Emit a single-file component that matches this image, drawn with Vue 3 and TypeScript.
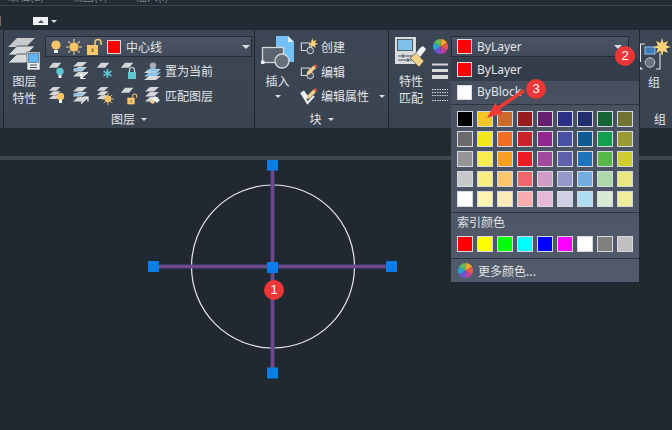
<script setup lang="ts">
const standard: string[][] = [
  ['#000000', '#f3c526', '#c9692a', '#981b20', '#66206f', '#2a3088', '#1f2f6d', '#156435', '#6f7430'],
  ['#6a6a6a', '#f3e81c', '#f26e22', '#cc2229', '#92278f', '#4650a5', '#0e5a92', '#10a04e', '#9a9a33'],
  ['#959595', '#f9ec50', '#f99d1c', '#ed1c24', '#a14a9d', '#5f60ad', '#1c75bc', '#57b847', '#cfcf2b'],
  ['#c7c8ca', '#f7ee7f', '#fdc66a', '#f0686c', '#d09cc6', '#9696ca', '#73acdf', '#add8a8', '#e8e87e'],
  ['#ffffff', '#fbf5b0', '#ffe9b5', '#f9acb0', '#e4b8d6', '#cfcfe6', '#b0dcf2', '#d8ead4', '#efef9b'],
]
const indexed: string[] = ['#ff0000', '#ffff00', '#00ff00', '#00ffff', '#0000ff', '#ff00ff', '#ffffff', '#808080', '#c0c0c0']
const handles: [number, number][] = [[272.5, 165], [272.5, 373], [153.5, 266.5], [391.5, 266.5], [272.5, 267.5]]
const wheel: { d: string; c: string }[] = [
  { d: 'M9 9V1A8 8 0 0 1 15.9 5Z', c: '#f5a623' },
  { d: 'M9 9L15.9 5A8 8 0 0 1 15.9 13Z', c: '#e8574a' },
  { d: 'M9 9L15.9 13A8 8 0 0 1 9 17Z', c: '#c2409a' },
  { d: 'M9 9V17A8 8 0 0 1 2.1 13Z', c: '#6a55d8' },
  { d: 'M9 9L2.1 13A8 8 0 0 1 2.1 5Z', c: '#2d9fd0' },
  { d: 'M9 9L2.1 5A8 8 0 0 1 9 1Z', c: '#5cbb5c' },
]
</script>

<template>
  <div class="app">
    <svg class="defs" width="0" height="0" aria-hidden="true">
      <defs>
        <symbol id="sheet" viewBox="0 0 18 18">
          <path d="M6 1H16L11 7H1Z" fill="#d5d7d8" />
        </symbol>
        <symbol id="stack" viewBox="0 0 18 18">
          <path d="M6 0H15L10 4.5H1Z" fill="#d5d7d8" />
          <path d="M6 5H15L10 9.5H1Z" fill="#d5d7d8" />
          <path d="M6 10H15L10 14.5H1Z" fill="#d5d7d8" />
        </symbol>
        <symbol id="bulb" viewBox="0 0 12 14">
          <circle cx="6" cy="5" r="4.6" />
          <path d="M4 10H8V13H4Z" fill="#eef0f1" />
        </symbol>
        <symbol id="sun" viewBox="0 0 16 16">
          <path d="M8 0V3M8 13V16M0 8H3M13 8H16M2.3 2.3L4.4 4.4M11.6 11.6L13.7 13.7M2.3 13.7L4.4 11.6M11.6 4.4L13.7 2.3" stroke="#e9d9a8" stroke-width="1.1" />
          <circle cx="8" cy="8" r="4.6" fill="#fbc566" />
        </symbol>
        <symbol id="open-lock" viewBox="0 0 16 18">
          <path d="M9 7V4.5A3 3 0 0 1 15 4.5V7" fill="none" stroke="#f4c56c" stroke-width="1.6" />
          <rect x="1" y="7" width="11" height="10" fill="#f7c76b" />
          <rect x="5.6" y="10.5" width="1.8" height="3.5" fill="#8a6a2c" />
        </symbol>
        <symbol id="block" viewBox="0 0 18 18">
          <path d="M1.5 4.5H11V13H1.5Z" fill="none" stroke="#d9dbdd" stroke-width="1.2" />
          <circle cx="11.5" cy="13" r="3.7" fill="#4a5361" stroke="#d9dbdd" stroke-width="1.1" />
        </symbol>
        <symbol id="pencil" viewBox="0 0 12 12">
          <path d="M1 9L7.5 2.5L10 5L3.5 11.5L0.8 11.8Z" fill="#f2cf8e" />
          <path d="M7.5 2.5L9 1L11.4 3.5L10 5Z" fill="#e8553f" />
        </symbol>
      </defs>
    </svg>

    <div class="menubar"><span>编辑(E)</span><span>视图(V)</span><span>插入(I)</span></div>
    <div class="quickbar">
      <i class="edge"></i>
      <span class="tab"><i class="up"></i></span>
      <i class="down small"></i>
    </div>

    <section class="ribbon">
      <div class="panel layer-panel">
        <div class="body">
          <div class="big-btn layer-big">
            <svg class="ic-big" width="33" height="34" viewBox="0 0 33 34">
              <path d="M9 1H27L18 10H0Z" fill="#c7c9ca" />
              <path d="M9 9H27L18 18H0Z" fill="#d6d8d9" stroke="#3b4452" stroke-width=".8" />
              <path d="M9 17H27L18 26H0Z" fill="#d6d8d9" stroke="#3b4452" stroke-width=".8" />
              <rect x="19" y="15" width="13" height="18" fill="#eceef0" stroke="#3b4452" stroke-width=".6" />
              <rect x="20.5" y="16.5" width="10" height="9" fill="#62b4f4" stroke="#39424e" stroke-width=".5" />
              <path d="M22 28H29M22 30.5H29" stroke="#4a5361" stroke-width="1" />
            </svg>
            <span>图层</span>
            <span>特性</span>
          </div>
          <div class="layer-main">
            <div class="layer-select">
              <svg class="bulb-yellow" width="12" height="14"><use href="#bulb" /></svg>
              <svg width="16" height="16"><use href="#sun" /></svg>
              <svg width="16" height="18"><use href="#open-lock" /></svg>
              <i class="red-box"></i>
              <span class="layer-name">中心线</span>
              <i class="down"></i>
            </div>
            <div class="tool-row">
              <svg width="18" height="18" viewBox="0 0 18 18">
                <use href="#sheet" width="15" height="15" />
                <circle cx="12" cy="9.5" r="3.7" fill="#5fc7d2" />
                <rect x="10.5" y="13" width="3" height="3" fill="#eef0f1" />
              </svg>
              <svg width="18" height="18" viewBox="0 0 18 18">
                <use href="#stack" />
                <path d="M2 6H12L10 8.5H1Z" fill="#8ec3ea" />
                <path d="M16 10L9 16M9 12V16.5H13.5" stroke="#fff" stroke-width="1.2" fill="none" />
              </svg>
              <svg width="18" height="18" viewBox="0 0 18 18">
                <use href="#sheet" width="15" height="15" />
                <path d="M11.5 7V16M7.5 9.3L15.5 13.7M7.5 13.7L15.5 9.3" stroke="#5fc7d2" stroke-width="1.6" />
              </svg>
              <svg width="18" height="18" viewBox="0 0 18 18">
                <use href="#sheet" width="15" height="15" />
                <path d="M9.5 10V8A2.5 2.5 0 0 1 14.5 8V10" fill="none" stroke="#b9e0e6" stroke-width="1.2" />
                <rect x="8" y="10" width="8" height="7" fill="#5fc7d2" />
              </svg>
              <svg width="18" height="18" viewBox="0 0 18 18">
                <path d="M5 7H17L12 11H0Z" fill="#d6d8d9" />
                <path d="M5 10.5H17L12 14.5H0Z" fill="#8ec3ea" />
                <path d="M5 14H17L12 18H0Z" fill="#d6d8d9" />
                <circle cx="9" cy="3.6" r="3.2" fill="#a9adb3" />
                <path d="M3.5 9.5A5.5 3.6 0 0 1 14.5 9.5Z" fill="#8ec3ea" />
              </svg>
              <span class="tool-text">置为当前</span>
            </div>
            <div class="tool-row">
              <svg width="18" height="18" viewBox="0 0 18 18">
                <use href="#stack" width="15" height="15" />
                <circle cx="12.5" cy="9.5" r="3.7" fill="#fbc566" />
                <rect x="11" y="13" width="3" height="3" fill="#eef0f1" />
              </svg>
              <svg width="18" height="18" viewBox="0 0 18 18">
                <use href="#stack" />
                <path d="M2 6H12L10 8.5H1Z" fill="#8ec3ea" />
                <path d="M9 16.5L16 10M11.5 10H16V14.5" stroke="#fff" stroke-width="1.2" fill="none" />
              </svg>
              <svg width="18" height="18" viewBox="0 0 18 18">
                <use href="#stack" width="15" height="15" />
                <use href="#sun" x="6" y="6" width="12" height="12" />
              </svg>
              <svg width="18" height="18" viewBox="0 0 18 18">
                <use href="#sheet" width="15" height="15" />
                <use href="#open-lock" x="6" y="6" width="12" height="12" />
              </svg>
              <svg width="18" height="18" viewBox="0 0 18 18">
                <use href="#stack" />
                <path d="M8 12L11 9L16 13L13 16Z" fill="#eef0f1" />
                <path d="M8 12L11 15L9 17L5.5 15Z" fill="#f2cf8e" />
              </svg>
              <span class="tool-text">匹配图层</span>
            </div>
          </div>
        </div>
        <div class="title"><span>图层</span><i class="down small"></i></div>
      </div>

      <div class="panel block-panel">
        <div class="body">
          <div class="big-btn insert-big">
            <svg class="ic-insert" width="34" height="34" viewBox="0 0 34 34">
              <path d="M15 0H27L33 6V26H15Z" fill="#73c1f6" />
              <path d="M27 0L33 6H27Z" fill="#d9eefb" />
              <rect x="1.5" y="11.5" width="21" height="15" fill="#5b6470" stroke="#d5d7d9" stroke-width="1.3" />
              <rect x="0" y="24.5" width="3.5" height="3.5" fill="#e8eaec" />
              <circle cx="21" cy="25" r="7" fill="#69717d" stroke="#d5d7d9" stroke-width="1.3" />
            </svg>
            <span>插入</span>
            <i class="down small insert-arrow"></i>
          </div>
          <div class="block-main">
            <div class="block-row">
              <svg width="18" height="18" viewBox="0 0 18 18">
                <use href="#block" y="1" width="16" height="16" />
                <path d="M12.5 0L13.5 3L16.5 2L15 4.5L18 6L15 7L15.8 10L13 8L10.5 10L11 7L8.5 6L11.5 4.5L10.5 2L12 3Z" fill="#fbd27a" />
              </svg>
              <span>创建</span>
            </div>
            <div class="block-row">
              <svg width="18" height="18" viewBox="0 0 18 18">
                <use href="#block" y="1" width="16" height="16" />
                <use href="#pencil" x="6" width="12" height="12" />
              </svg>
              <span>编辑</span>
            </div>
            <div class="block-row">
              <svg width="18" height="18" viewBox="0 0 18 18">
                <path d="M1 5.5L4 3.5L8 9L6 14Z" fill="#eef0f1" />
                <path d="M1 5.5L7.5 16L14 9" fill="none" stroke="#eef0f1" stroke-width="2" />
                <use href="#pencil" x="6" width="12" height="12" />
              </svg>
              <span>编辑属性</span>
              <i class="down small attr-arrow"></i>
            </div>
          </div>
        </div>
        <div class="title"><span>块</span><i class="down small"></i></div>
      </div>

      <div class="panel prop-panel">
        <div class="body">
          <div class="big-btn match-big">
            <svg class="ic-match" width="32" height="33" viewBox="0 0 32 33">
              <rect x="0" y="1" width="21" height="27" fill="#d9dbdd" />
              <rect x="2.5" y="3.5" width="15" height="11" fill="#7cc0ec" stroke="#39424e" stroke-width=".8" />
              <path d="M3 20H18M3 24H18M8 18V22M13 22V26" stroke="#4a5361" stroke-width="1.1" />
              <path d="M15 22L21 17L29 25L24 31Z" fill="#f3d089" stroke="#39424e" stroke-width=".6" />
              <path d="M21 17L25 12L28 10L31 13L29 16L25 21Z" fill="#eef0f1" />
            </svg>
            <span>特性</span>
            <span>匹配</span>
          </div>
          <div class="prop-icons">
            <svg width="17" height="17" viewBox="0 0 18 18">
              <path v-for="s in wheel" :key="s.d" :d="s.d" :fill="s.c" />
            </svg>
            <svg class="ic-lines" width="16" height="17" viewBox="0 0 16 17">
              <path d="M0 1.5H16" stroke="#d8dadc" stroke-width="2" />
              <path d="M0 7.5H16" stroke="#d8dadc" stroke-width="3" />
              <path d="M0 14H16" stroke="#d8dadc" stroke-width="4" />
            </svg>
            <svg class="ic-dashes" width="16" height="14" viewBox="0 0 16 14">
              <path d="M0 1.5H16M0 4.5H16M0 7.5H16M0 12.5H16" stroke="#d8dadc" stroke-width="1" stroke-dasharray="1.5 1" />
            </svg>
          </div>
          <div class="color-select">
            <i class="swatch-red"></i>
            <span>ByLayer</span>
            <i class="down"></i>
          </div>
        </div>
      </div>

      <div class="panel group-panel">
        <div class="body group-body">
          <svg class="ic-group" width="32" height="28" viewBox="0 0 32 28">
            <path d="M5 1H0.5V19M0.5 24V26H3M16 26H20V10" fill="none" stroke="#e5e7e9" stroke-width="1.1" />
            <rect x="5" y="4" width="10" height="7" fill="#3e7ab3" stroke="#8cc4ee" stroke-width="1" />
            <circle cx="10" cy="19.5" r="4.8" fill="#6c737d" stroke="#c5c8cb" stroke-width="1" />
            <path d="M22 -5L23.5 0L28 -2L26 2.5L31 4L26 5.5L28 10L23.5 8L22 13L20.5 8L16 10L18 5.5L13 4L18 2.5L16 -2L20.5 0Z" fill="#fbd27a" />
          </svg>
          <span>组</span>
        </div>
        <div class="group-title">组</div>
      </div>
    </section>

    <div class="gap"></div>
    <div class="strip"></div>

    <svg class="canvas" width="672" height="270" viewBox="0 160 672 270">
      <circle cx="273" cy="266.5" r="81.5" fill="none" stroke="#e6e8ea" stroke-width="1.2" />
      <path d="M272.5 165V373M153.5 266.5H391.5" stroke="#3f5094" stroke-width="4" />
      <path d="M272.5 165V373M153.5 266.5H391.5" stroke="#7a4688" stroke-width="2.4" />
      <rect v-for="h in handles" :key="h.join()" :x="h[0] - 5.5" :y="h[1] - 5.5" width="11" height="11" fill="#0a7ee8" />
    </svg>

    <div class="popup">
      <div class="pop-row active"><i class="swatch-red"></i><span>ByLayer</span></div>
      <div class="pop-row"><i class="swatch-white"></i><span>ByBlock</span></div>
      <div class="grid-wrap">
        <div v-for="(row, r) in standard" :key="r" class="swatches">
          <i v-for="c in row" :key="c" class="sw" :style="{ background: c }"></i>
        </div>
      </div>
      <div class="index-wrap">
        <div class="index-label">索引颜色</div>
        <div class="swatches">
          <i v-for="c in indexed" :key="c" class="sw" :style="{ background: c }"></i>
        </div>
      </div>
      <div class="more">
        <svg width="17" height="17" viewBox="0 0 18 18">
          <path v-for="s in wheel" :key="s.d" :d="s.d" :fill="s.c" />
        </svg>
        <span>更多颜色...</span>
      </div>
    </div>

    <svg class="arrow" width="40" height="32" viewBox="0 0 40 32">
      <path d="M36 0L38 3L13 20L16 24L0 29L8 14L11 17Z" fill="#ee3a35" />
    </svg>
    <span class="badge b1">1</span>
    <span class="badge b2">2</span>
    <span class="badge b3">3</span>
  </div>
</template>

<style scoped>
.app {
  position: relative;
  width: 672px;
  height: 430px;
  overflow: hidden;
  background: #212830;
  color: #e2e4e7;
  font-family: "Noto Sans CJK SC", "Noto Sans", sans-serif;
  font-size: 12px;
  line-height: 16px;
}
.app i { display: block; font-style: normal; }
.defs { position: absolute; }
.menubar {
  display: flex;
  gap: 28px;
  height: 6px;
  padding-left: 8px;
  overflow: hidden;
  background: #222a33;
  border-bottom: 1px solid #3c434b;
  box-sizing: border-box;
  font-size: 11px;
  line-height: 12px;
  color: #7d838a;
}
.menubar span { margin-top: -10px; }
.quickbar {
  display: flex;
  align-items: center;
  height: 24px;
  background: #222a33;
  padding-top: 6px;
  box-sizing: border-box;
}
.edge { width: 1px; height: 10px; background: #7a6a60; margin-right: 32px; }
.tab {
  display: flex;
  align-items: center;
  justify-content: center;
  width: 15px;
  height: 8px;
  background: #f0f1f2;
  margin-right: 3px;
}
.up { width: 0; height: 0; border: 3px solid transparent; border-top: 0; border-bottom: 3px solid #555; }
.down {
  width: 0;
  height: 0;
  border-left: 4px solid transparent;
  border-right: 4px solid transparent;
  border-top: 4px solid #d8dadc;
}
.down.small { border-left-width: 3.5px; border-right-width: 3.5px; border-top-width: 3.5px; }

.ribbon {
  display: flex;
  height: 98px;
  background: linear-gradient(#3d4654, #3a4350);
}
.panel { display: flex; flex-direction: column; box-sizing: border-box; border-left: 1px solid #20262e; }
.body { display: flex; height: 80px; padding-top: 6px; box-sizing: border-box; }
.title {
  display: flex;
  align-items: center;
  justify-content: center;
  gap: 6px;
  height: 18px;
}
.big-btn { display: flex; flex-direction: column; align-items: center; }

.layer-panel { margin-left: 3px; width: 251px; }
.layer-big { width: 41px; flex: none; }
.ic-big { margin: 1px 0 2px; }
.layer-big span:nth-of-type(2), .match-big span:nth-of-type(2) { margin-top: 1px; }
.layer-main { flex: 1; }
.layer-select {
  display: flex;
  align-items: center;
  gap: 4px;
  width: 207px;
  height: 21px;
  padding-left: 4px;
  margin-bottom: 1px;
  box-sizing: border-box;
  background: linear-gradient(#4b5464, #424b5a);
  border: 1px solid #252c35;
}
.bulb-yellow { fill: #fbc566; }
.red-box { width: 14px; height: 14px; box-sizing: border-box; background: #f00; border: 1px solid #d8dadc; margin-left: 1px; }
.layer-name { flex: 1; margin-left: 1px; }
.layer-select .down { margin-right: 1px; }
.tool-row { display: flex; align-items: center; gap: 6px; height: 25px; padding-left: 3px; }
.tool-text { margin-left: -3px; }

.block-panel { width: 134px; }
.insert-big { width: 45px; flex: none; }
.ic-insert { margin: 0 0 3px; }
.insert-arrow { margin-top: 6px; }
.block-row { display: flex; align-items: center; gap: 3px; height: 24.5px; }
.block-main { margin-top: -1px; }
.attr-arrow { margin-left: 7px; }

.prop-panel { width: 251px; }
.prop-panel .body { height: 98px; position: relative; }
.match-big { width: 44px; flex: none; }
.ic-match { margin: 0 0 4px; }
.prop-icons { display: flex; flex-direction: column; width: 18px; margin: 2px 0 0 -1px; }
.prop-icons svg { flex: none; }
.ic-lines { margin-top: 8px; }
.ic-dashes { margin-top: 8px; }
.color-select {
  display: flex;
  align-items: center;
  gap: 5px;
  width: 178px;
  height: 21px;
  margin-left: 1px;
  padding-left: 5px;
  box-sizing: border-box;
  background: linear-gradient(#4b5464, #424b5a);
  border: 1px solid #252c35;
}
.color-select span, .pop-row span { font-family: "Noto Sans", sans-serif; font-size: 12px; }
.color-select span { flex: 1; }
.color-select .down { margin-right: 6px; }
.swatch-red, .swatch-white {
  width: 15px;
  height: 15px;
  box-sizing: border-box;
  border: 1px solid #d8dadc;
  background: #f00;
}
.swatch-white { background: #fff; }

.group-panel { flex: 1; }
.group-body { flex-direction: column; padding: 13px 0 0 0; align-items: flex-start; }
.ic-group { overflow: visible; flex: none; }
.group-body span { margin: 3px 0 0 8px; }
.group-title { padding-left: 14px; margin-top: 1px; }

.gap { height: 28px; background: #222a33; }
.strip { height: 4px; background: #3f4650; }
.canvas { display: block; }

.popup {
  position: absolute;
  left: 451px;
  top: 58px;
  width: 188px;
  height: 224px;
  background: linear-gradient(#454e5d, #525b6b);
  display: flex;
  flex-direction: column;
}
.pop-row {
  display: flex;
  align-items: center;
  gap: 5px;
  height: 22px;
  padding-left: 6px;
}
.pop-row.active { height: 23px; background: #343c49; }
.grid-wrap, .index-wrap { border-top: 1px solid #2e3541; }
.grid-wrap { padding-top: 6px; margin-top: 1px; height: 108px; box-sizing: border-box; }
.swatches { display: flex; gap: 4px; padding-left: 6px; margin-bottom: 4px; }
.sw { width: 16px; height: 16px; box-sizing: border-box; border: 1px solid #d5d8dc; }
.index-wrap { height: 46px; box-sizing: border-box; }
.index-label { height: 23px; line-height: 18px; padding-left: 6px; }
.more {
  display: flex;
  align-items: center;
  gap: 4px;
  flex: 1;
  padding-left: 6px;
  border-top: 1px solid #2e3541;
}

.arrow { position: absolute; left: 487px; top: 89px; }
.badge {
  position: absolute;
  width: 20px;
  height: 20px;
  border-radius: 50%;
  background: #ee3537;
  color: #fff;
  font-family: "Liberation Sans", sans-serif;
  font-size: 13px;
  line-height: 20px;
  text-align: center;
}
.b1 { left: 264px; top: 280px; }
.b2 { left: 615px; top: 46px; }
.b3 { left: 526px; top: 79px; }
</style>
